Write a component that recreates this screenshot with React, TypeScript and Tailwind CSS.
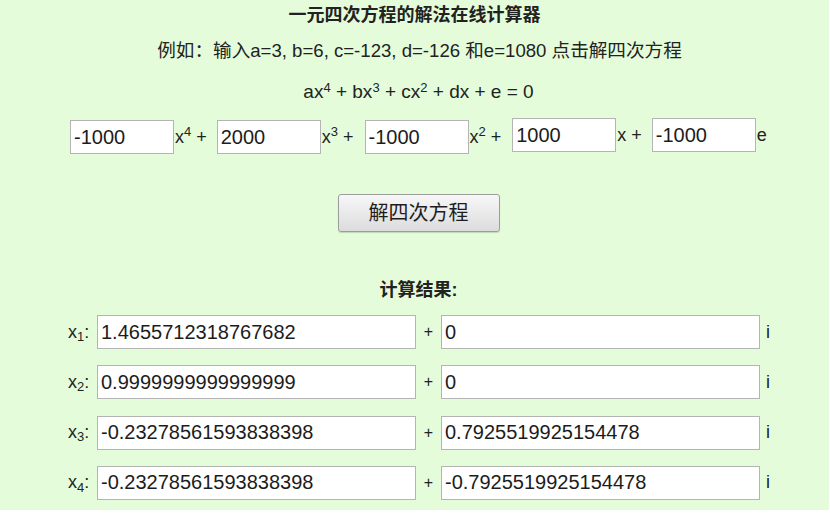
import React from 'react';

const font = "font-['Liberation_Sans','Noto_Sans_CJK_SC',sans-serif]";

const Box: React.FC<{ value: string; w: string; className?: string }> = ({ value, w, className = '' }) => (
  <input
    type="text"
    readOnly
    value={value}
    className={`${w} h-[34px] border border-[#b4b4b4] bg-white px-[3px] text-[20px] text-[#1c1c1c] outline-none ${font} ${className}`}
  />
);

const coefs = [
  { v: '-1000', label: <>x<sup className="text-[13px]">4</sup> +</>, top: 'mt-[2px]', gap: 'mr-[10px]' },
  { v: '2000', label: <>x<sup className="text-[13px]">3</sup> +</>, top: 'mt-[2px]', gap: 'mr-[11px]' },
  { v: '-1000', label: <>x<sup className="text-[13px]">2</sup> +</>, top: 'mt-[2px]', gap: 'mr-[11px]' },
  { v: '1000', label: <>x +</>, top: 'mt-0', gap: 'mr-[10px]' },
  { v: '-1000', label: <>e</>, top: 'mt-0', gap: '' },
];

const roots = [
  { re: '1.4655712318767682', im: '0' },
  { re: '0.9999999999999999', im: '0' },
  { re: '-0.23278561593838398', im: '0.7925519925154478' },
  { re: '-0.23278561593838398', im: '-0.7925519925154478' },
];

export default function App() {
  return (
    <div className="w-[830px] h-[516px] bg-white">
      <div className={`w-[829px] h-[510px] bg-[#e4fcda] text-[#222] flex flex-col ${font}`}>
        <h1 className="text-center font-bold text-[18px] leading-[24px] mt-[3px]">一元四次方程的解法在线计算器</h1>
        <p className="text-center text-[18.6px] leading-[24px] mt-[12px] pl-[10px]">
          例如：输入a=3, b=6, c=-123, d=-126 和e=1080 点击解四次方程
        </p>
        <p className="text-center text-[19px] leading-[24px] mt-[17px] pl-[8px]">
          ax<sup className="text-[13px]">4</sup> + bx<sup className="text-[13px]">3</sup> + cx<sup className="text-[13px]">2</sup> + dx + e = 0
        </p>

        <div className="flex items-start pl-[70px] mt-[14px] text-[18px]">
          {coefs.map((c, i) => (
            <div key={i} className={`flex items-center ${c.top}`}>
              <Box value={c.v} w="w-[104px]" />
              <span className={`ml-[1px] ${c.gap} whitespace-nowrap`}>{c.label}</span>
            </div>
          ))}
        </div>

        <div className="flex justify-center mt-[40px] pl-[8px]">
          <button className="w-[162px] h-[38px] rounded-[3px] border border-[#9c9c9c] bg-gradient-to-b from-[#f7f7f7] to-[#dcdcdc] text-[20px] text-[#1e1e1e] shadow-[0_1px_1px_rgba(0,0,0,0.15)]">
            解四次方程
          </button>
        </div>

        <h2 className="text-center font-bold text-[18px] leading-[24px] mt-[46px] pl-[8px]">计算结果:</h2>

        <div className="flex flex-col gap-[16.3px] mt-[13px] pl-[68px] text-[18px]">
          {roots.map((r, i) => (
            <div key={i} className="flex items-center">
              <span className="w-[29px] whitespace-nowrap">
                x<sub className="text-[13px]">{i + 1}</sub>:
              </span>
              <Box value={r.re} w="w-[319px]" />
              <span className="w-[25px] text-center text-[16px]">+</span>
              <Box value={r.im} w="w-[319px]" />
              <span className="ml-[6px]">i</span>
            </div>
          ))}
        </div>
      </div>
    </div>
  );
}
